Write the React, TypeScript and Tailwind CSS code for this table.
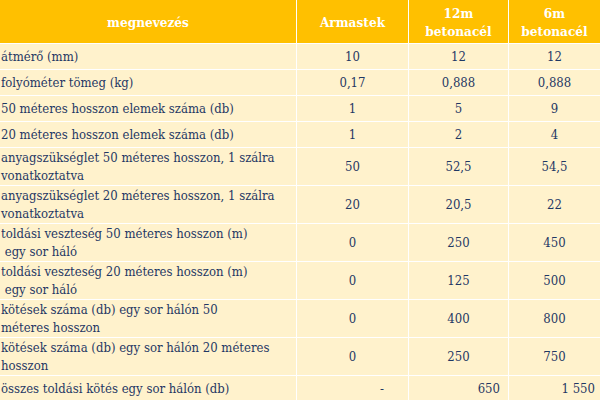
import React from "react";

type Row = { label: React.ReactNode; a: string; b: string; c: string; h: string };

const rows: Row[] = [
  { label: "átmérő (mm)", a: "10", b: "12", c: "12", h: "h-[25px]" },
  { label: "folyóméter tömeg (kg)", a: "0,17", b: "0,888", c: "0,888", h: "h-[25px]" },
  { label: "50 méteres hosszon elemek száma (db)", a: "1", b: "5", c: "9", h: "h-[25px]" },
  { label: "20 méteres hosszon elemek száma (db)", a: "1", b: "2", c: "4", h: "h-[25px]" },
  { label: <>anyagszükséglet 50 méteres hosszon, 1 szálra<br />vonatkoztatva</>, a: "50", b: "52,5", c: "54,5", h: "h-[37px]" },
  { label: <>anyagszükséglet 20 méteres hosszon, 1 szálra<br />vonatkoztatva</>, a: "20", b: "20,5", c: "22", h: "h-[37px]" },
  { label: <>toldási veszteség 50 méteres hosszon (m)<br />&nbsp;egy sor háló</>, a: "0", b: "250", c: "450", h: "h-[37px]" },
  { label: <>toldási veszteség 20 méteres hosszon (m)<br />&nbsp;egy sor háló</>, a: "0", b: "125", c: "500", h: "h-[37px]" },
  { label: <>kötések száma (db) egy sor hálón 50<br />méteres hosszon</>, a: "0", b: "400", c: "800", h: "h-[37px]" },
  { label: <>kötések száma (db) egy sor hálón 20 méteres<br />hosszon</>, a: "0", b: "250", c: "750", h: "h-[37px]" },
];

export default function App() {
  return (
    <div
      className="w-[600px] h-[400px] overflow-hidden bg-white text-[#1f3864] text-[13px] leading-[18px]"
      style={{ fontFamily: '"DejaVu Serif Condensed", "DejaVu Serif", serif' }}
    >
      <div className="grid grid-cols-[296px_111px_99px_91px] gap-px bg-white">
        <div className="h-[43px] bg-[#ffc000] text-white font-bold text-[13.5px] flex items-center justify-center text-center">megnevezés</div>
        <div className="h-[43px] bg-[#ffc000] text-white font-bold text-[13.5px] flex items-center justify-center text-center">Armastek</div>
        <div className="h-[43px] bg-[#ffc000] text-white font-bold text-[13.5px] flex items-center justify-center text-center">12m<br />betonacél</div>
        <div className="h-[43px] bg-[#ffc000] text-white font-bold text-[13.5px] flex items-center justify-center text-center">6m<br />betonacél</div>
        {rows.map((r, i) => (
          <React.Fragment key={i}>
            <div className={`${r.h} bg-[#fff2cc] flex items-center pl-px whitespace-nowrap`}>
              <div>{r.label}</div>
            </div>
            <div className={`${r.h} bg-[#fff2cc] flex items-center justify-center`}>{r.a}</div>
            <div className={`${r.h} bg-[#fff2cc] flex items-center justify-center`}>{r.b}</div>
            <div className={`${r.h} bg-[#fff2cc] flex items-center justify-center`}>{r.c}</div>
          </React.Fragment>
        ))}
        <div className="h-[26px] bg-[#fff2cc] flex items-center pl-px whitespace-nowrap">összes toldási kötés egy sor hálón (db)</div>
        <div className="h-[26px] bg-[#fff2cc] flex items-center justify-end pr-[24px]">-</div>
        <div className="h-[26px] bg-[#fff2cc] flex items-center justify-end pr-[8px]">650</div>
        <div className="h-[26px] bg-[#fff2cc] flex items-center justify-end pr-[5px]">1 550</div>
      </div>
    </div>
  );
}
